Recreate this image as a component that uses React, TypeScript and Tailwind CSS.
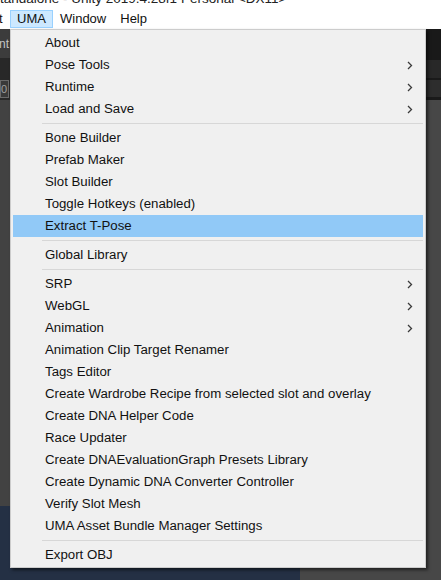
import React from "react";

type Item =
  | { kind: "item"; label: string; sub?: boolean; active?: boolean }
  | { kind: "sep" };

const items: Item[] = [
  { kind: "item", label: "About" },
  { kind: "item", label: "Pose Tools", sub: true },
  { kind: "item", label: "Runtime", sub: true },
  { kind: "item", label: "Load and Save", sub: true },
  { kind: "sep" },
  { kind: "item", label: "Bone Builder" },
  { kind: "item", label: "Prefab Maker" },
  { kind: "item", label: "Slot Builder" },
  { kind: "item", label: "Toggle Hotkeys (enabled)" },
  { kind: "item", label: "Extract T-Pose", active: true },
  { kind: "sep" },
  { kind: "item", label: "Global Library" },
  { kind: "sep" },
  { kind: "item", label: "SRP", sub: true },
  { kind: "item", label: "WebGL", sub: true },
  { kind: "item", label: "Animation", sub: true },
  { kind: "item", label: "Animation Clip Target Renamer" },
  { kind: "item", label: "Tags Editor" },
  { kind: "item", label: "Create Wardrobe Recipe from selected slot and overlay" },
  { kind: "item", label: "Create DNA Helper Code" },
  { kind: "item", label: "Race Updater" },
  { kind: "item", label: "Create DNAEvaluationGraph Presets Library" },
  { kind: "item", label: "Create Dynamic DNA Converter Controller" },
  { kind: "item", label: "Verify Slot Mesh" },
  { kind: "item", label: "UMA Asset Bundle Manager Settings" },
  { kind: "sep" },
  { kind: "item", label: "Export OBJ" },
];

const font = { fontFamily: '"Liberation Sans", "Noto Sans CJK SC", sans-serif' };

function Chevron() {
  return (
    <svg width="6" height="9" viewBox="0 0 6 9" className="mr-[10px]">
      <polyline points="1,1 4.5,4.5 1,8" fill="none" stroke="#3a3a3a" strokeWidth="1.3" />
    </svg>
  );
}

function DropMenu() {
  return (
    <div className="absolute left-[10px] top-[29px] w-[416px] border border-[#cccccc] bg-[#f0f0f0] px-[2px] pt-[2px] pb-[1px] shadow-[2px_2px_3px_rgba(0,0,0,0.55)]">
      {items.map((it, i) =>
        it.kind === "sep" ? (
          <div key={i} className="flex h-[7px] items-center pl-[29px]">
            <div className="h-px w-full bg-[#d7d7d7]" />
          </div>
        ) : (
          <div
            key={i}
            className={`flex h-[22px] items-center justify-between pl-[32px] text-[13.25px] text-[#111] ${
              it.active ? "bg-[#91c9f7]" : ""
            }`}
          >
            <span>{it.label}</span>
            {it.sub ? <Chevron /> : null}
          </div>
        )
      )}
    </div>
  );
}

export default function App() {
  return (
    <div className="relative flex h-[580px] w-[441px] flex-col overflow-hidden bg-[#444444]" style={font}>
      {/* window title, cut at the top edge */}
      <div className="h-[9px] overflow-hidden bg-white">
        <div className="-mt-[8px] whitespace-nowrap text-[13.5px] leading-[13px] text-[#222]">
          tandalone - Unity 2019.4.28f1 Personal &lt;DX11&gt;
        </div>
      </div>

      {/* menu bar */}
      <div className="flex h-[20px] items-center bg-white text-[13px] text-[#111]">
        <span className="-ml-[1px] w-[11px]">t</span>
        <div className="flex h-[18px] w-[43px] items-center justify-center border border-[#99d1ff] bg-[#cce8ff]">
          UMA
        </div>
        <span className="ml-[7px]">Window</span>
        <span className="ml-[14px]">Help</span>
      </div>

      {/* editor panels behind the menu */}
      <div className="flex flex-1">
        <div className="flex w-[300px] flex-col">
          <div className="flex h-[29px] items-center bg-[#3c3c3c] text-[12px] text-[#c4c4c4]">
            <span className="-ml-[1px]">nt</span>
          </div>
          <div className="h-[20px] bg-[#282828]" />
          <div className="flex h-[22px] items-center bg-[#282828]">
            <div className="flex h-[18px] w-[9px] items-center border border-[#6a6a6a] bg-[#393939] text-[11px] text-[#a0a0a0]">
              0
            </div>
          </div>
          <div className="h-[406px] bg-[#424242]" />
          <div className="flex-1 bg-[#243044]" />
        </div>
        <div className="flex flex-1 flex-col">
          <div className="h-[31px] bg-[#191919]" />
          <div className="h-[18px] bg-[#282828]" />
          <div className="h-[2px] bg-[#1a1a1a]" />
          <div className="h-[17px] bg-[#2d2d2d]" />
          <div className="h-[3px] bg-[#1a1a1a]" />
          <div className="flex-1 bg-[#474747]" />
        </div>
      </div>

      <DropMenu />
    </div>
  );
}
